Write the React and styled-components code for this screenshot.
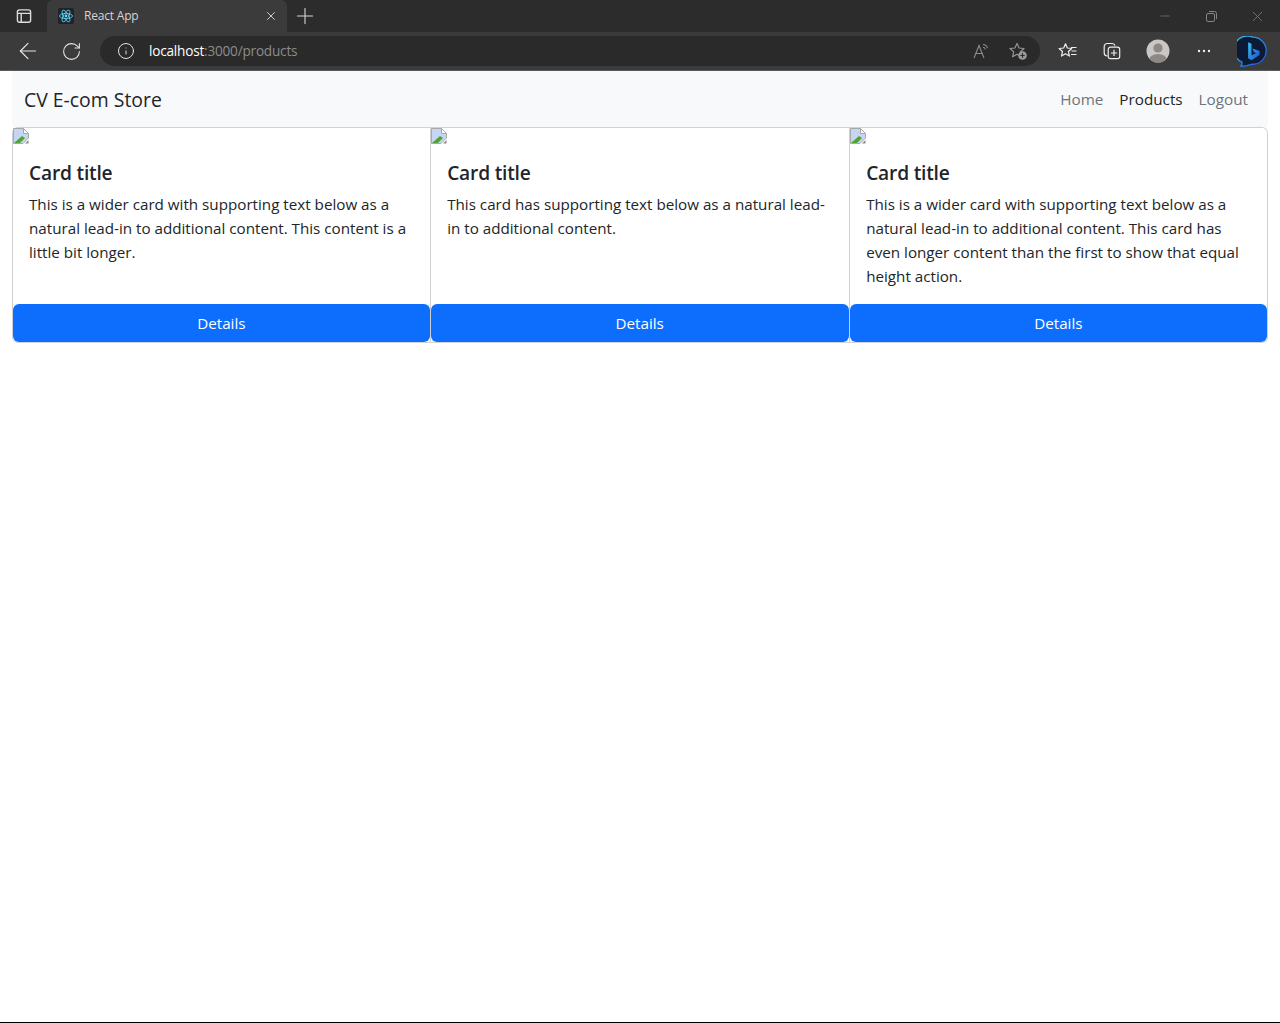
import React from "react";
import styled, { createGlobalStyle } from "styled-components";
import { ArrowLeft, RotateCw, Info, Plus, X, Minus } from "lucide-react";

const GlobalStyle = createGlobalStyle`
  html, body {
    margin: 0;
    height: 100%;
    background: #fff;
  }
  body {
    font-family: "Open Sans", "Noto Sans", "Liberation Sans", sans-serif;
    overflow: hidden;
  }
  #root {
    height: 100%;
  }
`;

const Screen = styled.div`
  height: 1023px;
  display: flex;
  flex-direction: column;
  border-bottom: 1px solid #000;
  box-sizing: border-box;
`;

// browser frame
const TabStrip = styled.div`
  height: 32px;
  background: #2c2c2c;
  display: flex;
  align-items: flex-end;
  color: #d6d6d6;
`;

const TabToggle = styled.div`
  width: 47px;
  height: 32px;
  display: flex;
  align-items: center;
  justify-content: center;
  flex: none;
`;

const Tab = styled.div`
  width: 240px;
  height: 32px;
  box-sizing: border-box;
  background: #3b3b3b;
  border-radius: 6px 6px 0 0;
  display: flex;
  align-items: center;
  padding: 0 9px 0 11px;
  flex: none;
`;

const TabTitle = styled.span`
  font-size: 12px;
  color: #d4d4d4;
  margin: -1px 0 0 10px;
  flex: 1;
  letter-spacing: -0.2px;
`;

const NewTab = styled.div`
  width: 36px;
  height: 32px;
  display: flex;
  align-items: center;
  justify-content: center;
  flex: none;
`;

const WindowButtons = styled.div`
  margin-left: auto;
  display: flex;
  height: 32px;
  align-items: center;
  color: #858585;
`;

const WindowButton = styled.div`
  width: 46px;
  display: flex;
  justify-content: center;
`;

const Toolbar = styled.div`
  height: 38px;
  flex: none;
  background: #3b3b3b;
  border-bottom: 1px solid #5a5a5a;
  display: flex;
  align-items: center;
  color: #e6e6e6;
`;

const NavButton = styled.div`
  width: 44px;
  display: flex;
  justify-content: center;
  flex: none;
  &:first-child {
    margin-left: 6px;
  }
  &:nth-child(2) svg {
    margin-left: -1px;
  }
`;

const AddressBar = styled.div`
  width: 940px;
  height: 30px;
  margin-left: 6px;
  background: #2a2a2a;
  border-radius: 15px;
  display: flex;
  align-items: center;
  padding: 0 12px 0 17px;
  box-sizing: border-box;
  flex: none;
`;

const Url = styled.div`
  margin: -2px 0 0 14px;
  font-size: 13.6px;
  letter-spacing: -0.21px;
  flex: 1;
  color: #fff;
  span {
    color: #8c8c8c;
  }
`;

const AddressIcons = styled.div`
  display: flex;
  align-items: center;
  gap: 18px;
  color: #9a9a9a;
`;

const ToolIcons = styled.div`
  display: flex;
  align-items: center;
  margin-left: 6px;
  flex: 1;
`;

const ToolIcon = styled.div`
  width: ${(p) => p.$width || 44}px;
  display: flex;
  justify-content: center;
  align-items: center;
  flex: none;
`;

// page
const Navbar = styled.nav`
  height: 56px;
  flex: none;
  margin: 0 12px;
  background: #f8f9fa;
  display: flex;
  align-items: center;
  justify-content: space-between;
  padding: 0 12px;
`;

const Brand = styled.a`
  font-size: 19.4px;
  color: #212529;
`;

const NavLinks = styled.div`
  display: flex;
  gap: 16px;
  padding-right: 8px;
`;

const NavLink = styled.a`
  font-size: 15.25px;
  color: ${(p) => (p.$active ? "#212529" : "#6c757d")};
`;

const CardGroup = styled.div`
  margin: 0 12px;
  display: grid;
  grid-template-columns: 418.67px 419px 1fr;
`;

const Card = styled.div`
  display: flex;
  flex-direction: column;
  min-width: 0;
  border: 1px solid #d0d1d2;
  border-left-width: ${(p) => (p.$first ? "1px" : "0")};
  border-radius: ${(p) =>
    p.$first ? "6px 0 0 6px" : p.$last ? "0 6px 6px 0" : "0"};
  background: #fff;
`;

const BrokenImage = styled.div`
  height: 16px;
  display: flex;
`;

const CardBody = styled.div`
  flex: 1;
  padding: 16px 16px 16px ${(p) => (p.$first ? "16px" : "16.5px")};
`;

const CardTitle = styled.h5`
  margin: 0 0 6px;
  font-size: 19.2px;
  line-height: 26px;
  font-weight: 600;
  letter-spacing: -0.2px;
  color: #212529;
`;

const CardText = styled.p`
  margin: 0;
  font-size: 15.2px;
  line-height: 24px;
  color: #212529;
`;

const DetailsButton = styled.button`
  height: 38px;
  padding: 0;
  border: 0;
  border-radius: 6px;
  background: #0d6efd;
  color: #fff;
  font-family: inherit;
  font-size: 15.2px;
`;

const ReactFavicon = () => (
  <svg width="16" height="16" viewBox="0 0 16 16">
    <rect width="16" height="16" rx="2" fill="#20232a" />
    <g fill="none" stroke="#61dafb" strokeWidth="0.8">
      <ellipse cx="8" cy="8" rx="6.5" ry="2.6" />
      <ellipse cx="8" cy="8" rx="6.5" ry="2.6" transform="rotate(60 8 8)" />
      <ellipse cx="8" cy="8" rx="6.5" ry="2.6" transform="rotate(120 8 8)" />
    </g>
    <circle cx="8" cy="8" r="1.4" fill="#61dafb" />
  </svg>
);

const TabsIcon = () => (
  <svg width="16" height="16" viewBox="0 0 16 16" fill="none" stroke="#dedede" strokeWidth="1.4">
    <rect x="1.4" y="1.9" width="13.2" height="12.4" rx="2" />
    <path d="M1.4 5.4h13.2M5.2 5.4v8.9" />
  </svg>
);

const RestoreIcon = () => (
  <svg width="11" height="11" viewBox="0 0 11 11" fill="none" stroke="#858585" strokeWidth="1">
    <rect x="0.5" y="2.5" width="8" height="8" rx="1.5" />
    <path d="M3 .5h5.5a2 2 0 0 1 2 2V8" />
  </svg>
);

const ReadAloudIcon = () => (
  <svg width="18" height="18" viewBox="0 0 18 18" fill="none" stroke="#8e8e8e" strokeWidth="1.1">
    <path d="M2 16 7 3.500 12 16M3.800 11.500h6.400" />
    <path d="M11 2.500a5 5 0 0 1 4.500 3.700M11 5.200a3 3 0 0 1 2.400 2.200" />
  </svg>
);

const FavoriteAddIcon = () => (
  <svg width="20" height="20" viewBox="0 0 20 20" fill="none">
    <path
      d="M9 2.400 11.100 7l5 .5-3.800 3.300 1.100 4.900L9 13.200l-4.400 2.500 1.100-4.900L1.900 7.500l5-.5z"
      stroke="#9a9a9a"
      strokeWidth="1.1"
      strokeLinejoin="round"
    />
    <circle cx="14.500" cy="14.500" r="4.300" fill="#9a9a9a" />
    <path d="M14.500 12.300v4.400M12.300 14.500h4.400" stroke="#2a2a2a" strokeWidth="1.1" />
  </svg>
);

const FavoritesIcon = () => (
  <svg width="20" height="20" viewBox="0 0 20 20" fill="none" stroke="#eee" strokeWidth="1.2">
    <path
      d="M7.500 2.800 9.300 7l4.500.5-3.400 3 1 4.600-3.900-2.300-4 2.300 1-4.600-3.400-3L5.700 7z"
      strokeLinejoin="round"
    />
    <path d="M13 6.500h5.500M13.500 10h5M13 13.500h5.500" />
  </svg>
);

const CollectionsIcon = () => (
  <svg width="20" height="20" viewBox="0 0 20 20" fill="none" stroke="#eee" strokeWidth="1.2">
    <path d="M5.500 15A3.200 3.200 0 0 1 2.200 12V5.500a3 3 0 0 1 3-3h5a3 3 0 0 1 2.800 2.200" />
    <rect x="6.200" y="6.200" width="11.500" height="11.500" rx="2.200" />
    <path d="M12 8.800v6.300M8.800 12h6.300" />
  </svg>
);

const Avatar = () => (
  <svg width="24" height="24" viewBox="0 0 24 24">
    <defs>
      <clipPath id="avatarClip">
        <circle cx="12" cy="12" r="11.500" />
      </clipPath>
    </defs>
    <circle cx="12" cy="12" r="11.500" fill="#c9c6c3" />
    <g clipPath="url(#avatarClip)" fill="#8c8885">
      <circle cx="12" cy="9" r="4.600" />
      <ellipse cx="12" cy="21" rx="9" ry="6" />
    </g>
  </svg>
);

const BingIcon = () => (
  <svg width="31" height="31" viewBox="0 0 32 32" fill="none">
    <defs>
      <linearGradient id="bingRing" x1="0" y1="0" x2="1" y2="1">
        <stop offset="0" stopColor="#35c1f1" />
        <stop offset="1" stopColor="#1b4fd8" />
      </linearGradient>
    </defs>
    <path
      d="M16.500 1.200a14 14 0 0 1 2 27.800c-2 .3-3.500 0-5.500.7-2.500.9-6 2-9 1.300.8-1 1.500-2.500 1.200-4A14 14 0 0 1 16.500 1.200z"
      fill="#0d1a33"
      stroke="url(#bingRing)"
      strokeWidth="1.400"
    />
    <path
      d="M11.500 6.500 15 8v12.200l4.600-2.700-2.200-1.100-1.400-3.400 7.300 2.600v4.100L15 25l-3.500-2z"
      fill="url(#bingRing)"
    />
  </svg>
);

const BrokenImageIcon = () => (
  <svg width="16" height="16" viewBox="0 0 16 16">
    <path d="M.5.5h10l5 5v4.500l-5.500 5.500H.5z" fill="#c6d6f2" stroke="#a8a8a8" />
    <path d="M10.500.5v5h5z" fill="#fff" stroke="#a8a8a8" />
    <path d="M1 15 9 8l3 2-5 5z" fill="#4fa52f" />
    <path d="M12 15.500 15.500 12v3.500z" fill="#8a8a8a" />
  </svg>
);

const products = [
  {
    id: 1,
    text: "This is a wider card with supporting text below as a natural lead-in to additional content. This content is a little bit longer.",
  },
  {
    id: 2,
    text: "This card has supporting text below as a natural lead-in to additional content.",
  },
  {
    id: 3,
    text: "This is a wider card with supporting text below as a natural lead-in to additional content. This card has even longer content than the first to show that equal height action.",
  },
];

const App = () => {
  return (
    <Screen>
      <GlobalStyle />
      <TabStrip>
        <TabToggle>
          <TabsIcon />
        </TabToggle>
        <Tab>
          <ReactFavicon />
          <TabTitle>React App</TabTitle>
          <X size={14} strokeWidth={1.6} />
        </Tab>
        <NewTab>
          <Plus size={26} strokeWidth={1} />
        </NewTab>
        <WindowButtons>
          <WindowButton>
            <Minus size={14} strokeWidth={1.1} />
          </WindowButton>
          <WindowButton>
            <RestoreIcon />
          </WindowButton>
          <WindowButton>
            <X size={17} strokeWidth={1} />
          </WindowButton>
        </WindowButtons>
      </TabStrip>
      <Toolbar>
        <NavButton>
          <ArrowLeft size={26} strokeWidth={1.1} />
        </NavButton>
        <NavButton>
          <RotateCw size={21} strokeWidth={1.2} />
        </NavButton>
        <AddressBar>
          <Info size={18} strokeWidth={1.3} />
          <Url>
            localhost<span>:3000/products</span>
          </Url>
          <AddressIcons>
            <ReadAloudIcon />
            <FavoriteAddIcon />
          </AddressIcons>
        </AddressBar>
        <ToolIcons>
          <ToolIcon>
            <FavoritesIcon />
          </ToolIcon>
          <ToolIcon>
            <CollectionsIcon />
          </ToolIcon>
          <ToolIcon $width={48}>
            <Avatar />
          </ToolIcon>
          <ToolIcon>
            <svg width="16" height="4" viewBox="0 0 16 4" fill="#eee">
              <circle cx="3" cy="2" r="1.2" />
              <circle cx="8" cy="2" r="1.2" />
              <circle cx="13" cy="2" r="1.2" />
            </svg>
          </ToolIcon>
          <ToolIcon $width={52}>
            <BingIcon />
          </ToolIcon>
        </ToolIcons>
      </Toolbar>

      <Navbar>
        <Brand>CV E-com Store</Brand>
        <NavLinks>
          <NavLink>Home</NavLink>
          <NavLink $active>Products</NavLink>
          <NavLink>Logout</NavLink>
        </NavLinks>
      </Navbar>

      <CardGroup>
        {products.map((product, index) => (
          <Card
            key={product.id}
            $first={index === 0}
            $last={index === products.length - 1}
          >
            <BrokenImage>
              <BrokenImageIcon />
            </BrokenImage>
            <CardBody $first={index === 0}>
              <CardTitle>Card title</CardTitle>
              <CardText>{product.text}</CardText>
            </CardBody>
            <DetailsButton>Details</DetailsButton>
          </Card>
        ))}
      </CardGroup>
    </Screen>
  );
};

export default App;
